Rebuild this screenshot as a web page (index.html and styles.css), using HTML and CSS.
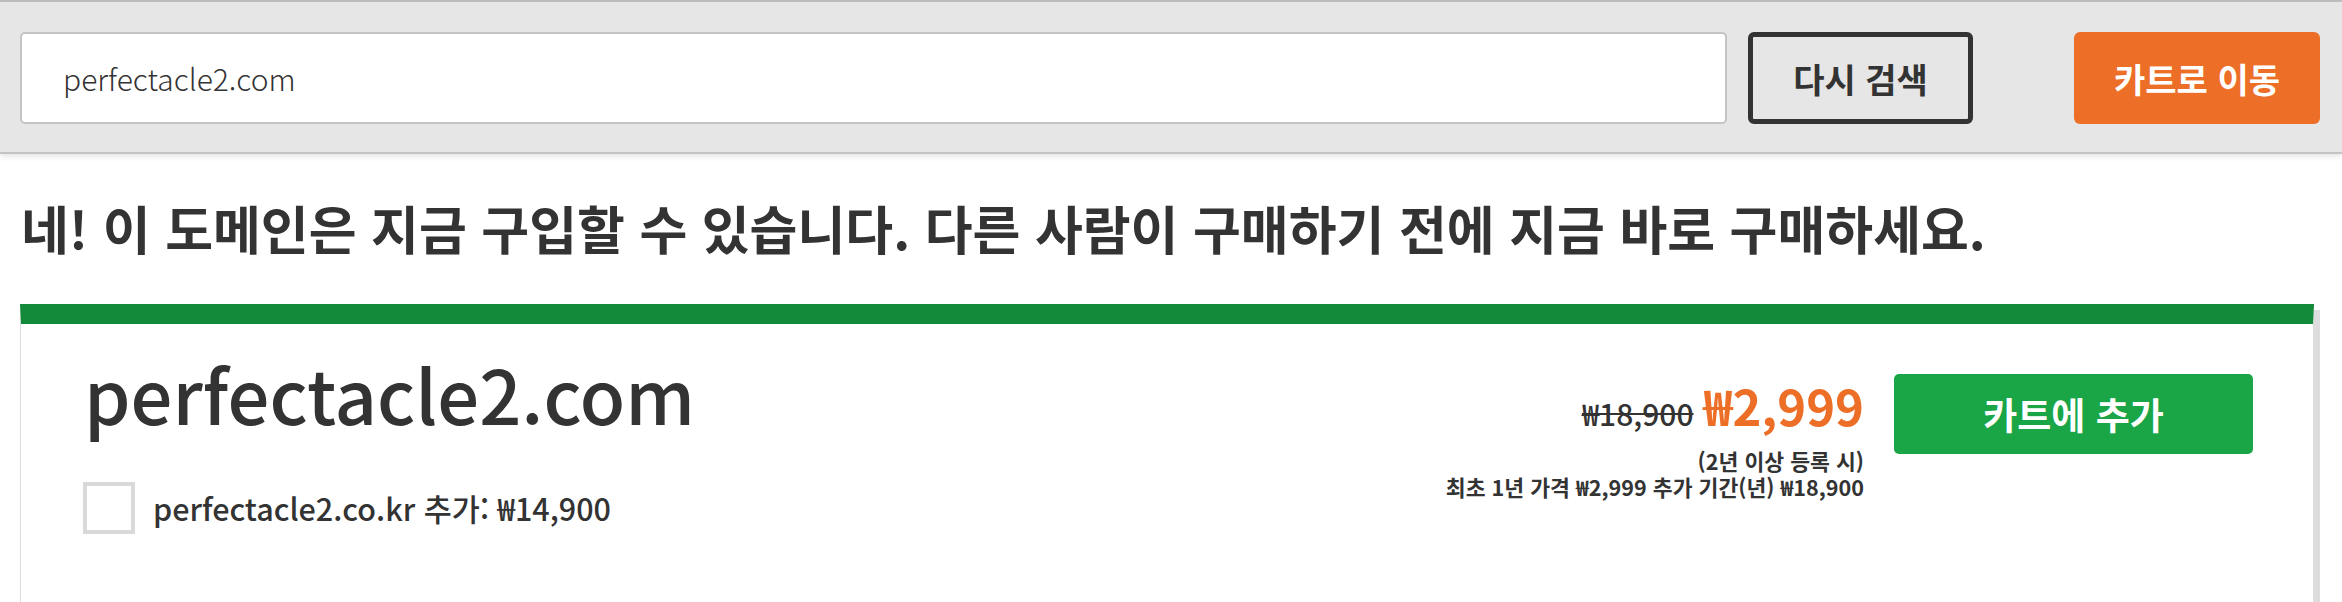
FILE: index.html
```html
<!DOCTYPE html>
<html lang="ko">
<head>
<meta charset="utf-8">
<link rel="stylesheet" href="styles.css">
</head>
<body>
<header class="topbar">
  <input class="search" type="text" value="perfectacle2.com">
  <button class="btn-research">다시 검색</button>
  <button class="btn-cart">카트로 이동</button>
</header>
<main class="main">
  <h1 class="headline">네! 이 도메인은 지금 구입할 수 있습니다. 다른 사람이 구매하기 전에 지금 바로 구매하세요.</h1>
  <section class="card">
    <div class="card-left">
      <div class="domain">perfectacle2.com</div>
      <label class="addon">
        <span class="checkbox"></span>
        <span class="addon-text">perfectacle2.co.kr 추가: ₩14,900</span>
      </label>
    </div>
    <div class="card-right">
      <div class="price">
        <div class="price-line">
          <span class="old">₩18,900</span>
          <span class="new">₩2,999</span>
        </div>
        <div class="note first">(2년 이상 등록 시)</div>
        <div class="note">최초 1년 가격 ₩2,999 추가 기간(년) ₩18,900</div>
      </div>
      <button class="btn-add">카트에 추가</button>
    </div>
  </section>
</main>
</body>
</html>
```
FILE: styles.css
```css
* { box-sizing: border-box; }
body {
  margin: 0;
  background: #fff;
  color: #333;
  font-family: "Noto Sans CJK KR", "Noto Sans", sans-serif;
}
.topbar {
  display: flex;
  align-items: center;
  padding: 30px 22px 28px 20px;
  background: #e6e6e6;
  border-top: 2px solid #bcbcbc;
  border-bottom: 2px solid #c4c4c4;
  box-shadow: 0 2px 6px rgba(0,0,0,0.12);
}
.search {
  flex: 1;
  min-width: 0;
  height: 92px;
  border: 2px solid #c4c4c4;
  border-radius: 5px;
  padding: 0 0 0 41px;
  font-family: inherit;
  font-size: 30px;
  font-weight: 300;
  color: #333;
  background: #fff;
  outline: none;
}
.btn-research {
  flex: none;
  width: 225px;
  height: 92px;
  margin-left: 21px;
  border: 5px solid #333;
  border-radius: 6px;
  background: transparent;
  color: #333;
  font-family: inherit;
  font-size: 34px;
  font-weight: 700;
}
.btn-cart {
  flex: none;
  width: 246px;
  height: 92px;
  margin-left: 101px;
  border: 0;
  border-radius: 6px;
  background: #ec6e27;
  color: #fff;
  font-family: inherit;
  font-size: 34px;
  font-weight: 700;
}
.main {
  padding: 0 28px 0 20px;
}
.headline {
  margin: 0;
  padding: 43px 0 45px 1px;
  font-size: 52px;
  font-weight: 700;
  line-height: 1.2;
  color: #333;
}
.card {
  display: flex;
  justify-content: space-between;
  min-height: 320px;
  border-top: 20px solid #138a3a;
  border-left: 1px solid #ddd;
  border-right: 1px solid #ddd;
  box-shadow: 6px 6px 0 #ddd;
  padding: 32px 60px 0 63px;
}
.domain {
  font-size: 74px;
  font-weight: 500;
  line-height: 1;
  color: #333;
}
.addon {
  display: flex;
  align-items: center;
  margin-top: 52px;
}
.checkbox {
  width: 52px;
  height: 52px;
  border: 4px solid #d9d9d9;
  background: #fff;
  flex: none;
  margin-left: -1px;
}
.addon-text {
  margin-left: 18px;
  font-size: 30.5px;
  font-weight: 500;
}
.card-right {
  display: flex;
  align-items: flex-start;
  gap: 30px;
  margin-top: 18px;
}
.price {
  text-align: right;
}
.price-line {
  display: flex;
  align-items: baseline;
  justify-content: flex-end;
  gap: 10px;
  line-height: 1;
  margin-top: 6px;
}
.old {
  font-size: 30px;
  font-weight: 500;
  text-decoration: line-through;
  text-decoration-thickness: 2px;
}
.new {
  font-size: 49px;
  font-weight: 700;
  color: #ec6e27;
}
.note {
  font-size: 21.6px;
  font-weight: 700;
  line-height: 26px;
}
.note.first { margin-top: 19px; }
.btn-add {
  flex: none;
  width: 359px;
  height: 80px;
  border: 0;
  border-radius: 5px;
  background: #1aa546;
  color: #fff;
  font-family: inherit;
  font-size: 37px;
  font-weight: 700;
}
```
